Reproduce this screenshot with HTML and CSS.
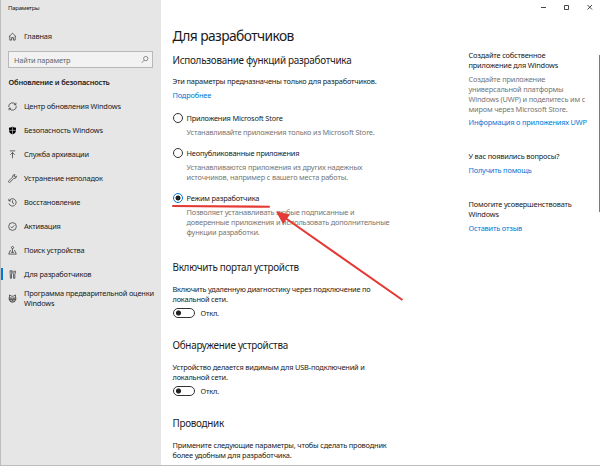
FILE: index.html
```
<!DOCTYPE html>
<html lang="ru">
<head>
<meta charset="utf-8">
<title>Параметры</title>
<link rel="stylesheet" href="styles.css">
</head>
<body>
<div class="window">
  <aside class="sidebar">
    <div class="caption">Параметры</div>
    <a class="item home">
      <svg class="icon" viewBox="0 0 10 10"><path d="M1 5.2 5 1.4l4 3.8M2 4.5V9h2V6.2h2V9h2V4.5"/></svg>
      <span>Главная</span>
    </a>
    <div class="search">
      <span>Найти параметр</span>
      <svg class="icon thin" viewBox="0 0 10 10"><circle cx="6.4" cy="4" r="2.4"/><path d="M4.7 5.8 2 8.6"/></svg>
    </div>
    <div class="group">Обновление и безопасность</div>
    <nav class="nav">
      <a class="item">
        <svg class="icon" viewBox="0 0 10 10"><path d="M.8 5.7A4.2 4.2 0 0 1 8.6 3M9.2 4.3A4.2 4.2 0 0 1 1.4 7M8.8.8V3H6.6M1.2 9.2V7h2.2"/></svg>
        <span>Центр обновления Windows</span>
      </a>
      <a class="item">
        <svg class="icon" viewBox="0 0 10 10"><path class="solid" d="M5 .6C6 1.5 7.4 1.9 8.900 1.900V5c0 2.100-1.600 3.600-3.900 4.500C2.700 8.600 1.100 7.100 1.100 5V1.900C2.600 1.900 4 1.500 5 .6z"/><path class="cut" d="M5 .6v9M1 4.800h8"/></svg>
        <span>Безопасность Windows</span>
      </a>
      <a class="item">
        <svg class="icon" viewBox="0 0 10 10"><path d="M2 1h6M5 9.200V2.800M2.600 5.200 5 2.800l2.400 2.400"/></svg>
        <span>Служба архивации</span>
      </a>
      <a class="item">
        <svg class="icon" viewBox="0 0 10 10"><path d="M9.300 2.300 7.800 3.600 6.500 2.300 7.900.8C6 .4 4.700 1.800 5.100 3.500L.7 7.900c-.6.800.6 2 1.400 1.400l4.400-4.400c1.700.4 3.200-.9 2.800-2.600z"/></svg>
        <span>Устранение неполадок</span>
      </a>
      <a class="item">
        <svg class="icon" viewBox="0 0 10 10"><path d="M1.300 3A4.100 4.100 0 1 1 1 6M1 .9V3.200h2.300M5 2.700V5.300l1.700 1"/></svg>
        <span>Восстановление</span>
      </a>
      <a class="item">
        <svg class="icon" viewBox="0 0 10 10"><circle cx="5" cy="5" r="4.300"/><path d="M3 5.100 4.400 6.500 7.100 3.700"/></svg>
        <span>Активация</span>
      </a>
      <a class="item">
        <svg class="icon" viewBox="0 0 10 10"><circle cx="5" cy="1.700" r="1.200"/><path d="M5 2.900V7M3.300 5.200H2.300L.8 9H9.200L7.700 5.200H6.700M3.300 7h3.400"/></svg>
        <span>Поиск устройства</span>
      </a>
      <a class="item active">
        <svg class="icon" viewBox="0 0 10 10"><path d="M2.300.8h1.900v3L3.900 4.300v4.900H2.600V4.300L2.300 3.800zM5.500.8v2.700l.7.800v4.900h1.400V4.300l.6-.8V.8M6.900.8v2"/></svg>
        <span>Для разработчиков</span>
      </a>
      <a class="item">
        <svg class="icon" viewBox="0 0 10 10"><path d="M1.700 4.200V1L4 2.400h2L8.300 1v3.200M.5 4.500h9M.8 6.200h8.400M2 7.900h6M2.300 4.200c-1.300 2.600 0 5 2.700 5s4-2.400 2.700-5M3.300 5.300h.9M5.800 5.300h.9M4.300 7h1.400"/></svg>
        <span>Программа предварительной оценки<br>Windows</span>
      </a>
    </nav>
  </aside>

  <main class="main">
    <h1>Для разработчиков</h1>
    <section>
      <h2>Использование функций разработчика</h2>
      <p>Эти параметры предназначены только для разработчиков.</p>
      <a class="link more">Подробнее</a>
      <div class="option">
        <span class="radio"></span>
        <div><div class="label">Приложения Microsoft Store</div>
        <div class="hint">Устанавливайте приложения только из Microsoft Store.</div></div>
      </div>
      <div class="option">
        <span class="radio"></span>
        <div><div class="label">Неопубликованные приложения</div>
        <div class="hint">Устанавливаются приложения из других надежных<br>источников, например с вашего места работы.</div></div>
      </div>
      <div class="option">
        <span class="radio checked"></span>
        <div><div class="label">Режим разработчика</div>
        <div class="hint">Позволяет устанавливать любые подписанные и<br>доверенные приложения и использовать дополнительные<br>функции разработки.</div></div>
      </div>
    </section>
    <section>
      <h2>Включить портал устройств</h2>
      <p>Включить удаленную диагностику через подключение по<br>локальной сети.</p>
      <div class="switch"><span class="toggle"></span>Откл.</div>
    </section>
    <section>
      <h2>Обнаружение устройства</h2>
      <p>Устройство делается видимым для USB-подключений и<br>локальной сети.</p>
      <div class="switch"><span class="toggle"></span>Откл.</div>
    </section>
    <section>
      <h2>Проводник</h2>
      <p>Примените следующие параметры, чтобы сделать проводник<br>более удобным для разработчика.</p>
    </section>
  </main>

  <aside class="side">
    <div class="controls">
      <svg viewBox="0 0 6 6"><path d="M0 3.500h5"/></svg>
      <svg viewBox="0 0 6 6"><path d="M.5 1.500h4v4h-4z"/></svg>
      <svg viewBox="0 0 6 6"><path d="m.5 1 4.500 4.500M5 1 .5 5.500"/></svg>
    </div>
    <div class="related">
      <div>Создайте собственное<br>приложение для Windows</div>
      <div class="hint">Создайте приложение<br>универсальной платформы<br>Windows (UWP) и поделитесь им с<br>миром через Microsoft Store.</div>
      <a class="link">Информация о приложениях UWP</a>
    </div>
    <div class="related">
      <div>У вас появились вопросы?</div>
      <a class="link">Получить помощь</a>
    </div>
    <div class="related">
      <div>Помогите усовершенствовать<br>Windows</div>
      <a class="link">Оставить отзыв</a>
    </div>
  </aside>
  <div class="scrollbar"></div>
  <svg class="marks" viewBox="0 0 600 466">
    <path class="stroke" d="M172.200 206 269.800 206.700M402.500 300 286 218.500"/>
    <path class="head" d="M276 211.500 290 214.500 283 224z"/>
  </svg>
</div>
</body>
</html>
```
FILE: styles.css
```
* { box-sizing: border-box; }

body {
  margin: 0;
  background: #fff;
  color: #1a1a1a;
  font: 7.4px/10px "Noto Sans", "Open Sans", sans-serif;
  letter-spacing: -0.18px;
  white-space: nowrap;
}

h1, h2, p { margin: 0; font-weight: 400; }

.window {
  position: relative;
  display: flex;
  width: 600px;
  height: 466px;
  overflow: hidden;
  border-left: 1px solid #bdbdbd;
  border-bottom: 1px solid #bdbdbd;
}

/* Navigation column */
.sidebar {
  width: 160px;
  flex: none;
  background: #e6e6e6;
}

.caption {
  padding: 3px 0 0 7px;
  font-size: 6.1px;
  letter-spacing: -0.3px;
}

.item {
  display: flex;
  align-items: center;
  gap: 7px;
  height: 24px;
  padding-left: 7px;
}

.item.active {
  background: linear-gradient(#0078d7, #0078d7) 0 50% / 2px 12px no-repeat;
}

.icon {
  width: 9px;
  height: 9px;
  flex: none;
  fill: none;
  stroke: #303030;
  stroke-width: 0.8;
}

.icon.thin { stroke: #666; }
.icon .solid { fill: #000; stroke: none; }
.icon .cut { stroke: #e6e6e6; stroke-width: 0.6; }

.home { margin-top: 11px; }

.search {
  display: flex;
  align-items: center;
  justify-content: space-between;
  width: 145px;
  height: 17px;
  margin: 3px 0 0 7px;
  padding: 0 3px 0 5px;
  border: 1px solid #a0a0a0;
  outline: 0.5px solid #b8b8b8;
  outline-offset: -1.5px;
  background: #f2f2f2;
  color: #666;
}

.group {
  margin: 9px 0 7px 7.5px;
  font-weight: 600;
}

/* Settings content */
.main {
  width: 298px;
  flex: none;
  padding: 26px 0 0 11.5px;
}

h1 {
  height: 27px;
  font-size: 13.8px;
  line-height: 20px;
  letter-spacing: -0.6px;
}

h2 {
  margin-bottom: 10px;
  font-size: 9.9px;
  line-height: 14px;
  letter-spacing: -0.27px;
}

section { margin-bottom: 20px; }
section:first-of-type { margin-bottom: 23px; }
section:first-of-type h2 { margin-bottom: 9px; }
section:first-of-type p { margin-bottom: 4px; }

.link { display: block; color: #0078d7; }
.more { margin-bottom: 13px; }

.option {
  display: flex;
  gap: 4px;
  margin-bottom: 11px;
}

.label { margin-bottom: 4px; }
.hint { color: #767676; }

.radio {
  width: 10px;
  height: 10px;
  flex: none;
  border: 1px solid #333;
  border-radius: 50%;
}

.radio.checked {
  border-color: #0078d7;
  background: radial-gradient(circle, #222 2.2px, #fff 2.8px);
}

.switch {
  display: flex;
  align-items: center;
  gap: 6px;
  margin-top: 4px;
}

.toggle {
  width: 22px;
  height: 10px;
  border: 1px solid #333;
  border-radius: 5px;
  background: radial-gradient(circle at 4.5px 4px, #222 2.2px, #fff 2.9px);
}

/* Related links */
.side { width: 130px; flex: none; padding-left: 9.5px; }

.controls {
  display: flex;
  gap: 17px;
  height: 50px;
  padding: 4px 0 0 72px;
}

.controls svg {
  width: 6px;
  height: 6px;
  flex: none;
  fill: none;
  stroke: #333;
  stroke-width: 0.9;
}

.related { margin-bottom: 24px; }
.related .link { margin-top: 4px; }
.related .hint { margin-top: 4px; }
.related .hint + .link { margin-top: 3px; }

.scrollbar {
  position: absolute;
  top: 55px;
  right: 0;
  width: 1px;
  height: 157px;
  background: #7a7a7a;
}

/* Pointer drawn over the page */
.marks {
  position: absolute;
  top: 0;
  left: -1px;
  width: 600px;
  height: 466px;
}

.marks .stroke { fill: none; stroke: #e53935; stroke-width: 2.1; }
.marks .head { fill: #e53935; }
```
